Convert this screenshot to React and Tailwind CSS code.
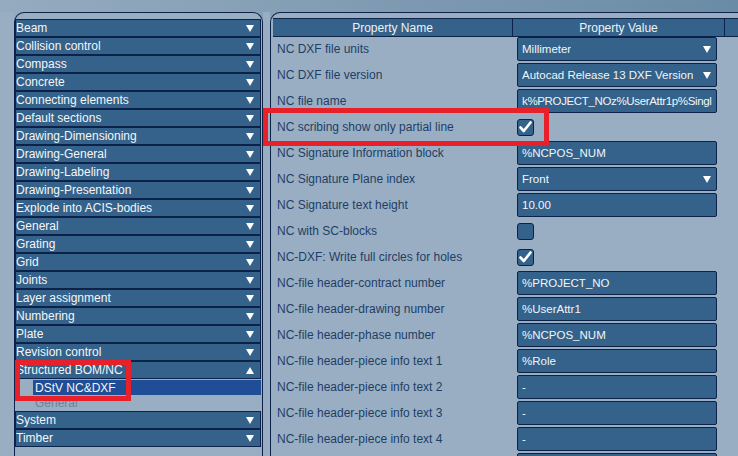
import React from "react";

const leftItems = [
  "Beam",
  "Collision control",
  "Compass",
  "Concrete",
  "Connecting elements",
  "Default sections",
  "Drawing-Dimensioning",
  "Drawing-General",
  "Drawing-Labeling",
  "Drawing-Presentation",
  "Explode into ACIS-bodies",
  "General",
  "Grating",
  "Grid",
  "Joints",
  "Layer assignment",
  "Numbering",
  "Plate",
  "Revision control",
];

const rows = [
  { name: "NC DXF file units", type: "select", value: "Millimeter" },
  { name: "NC DXF file version", type: "select", value: "Autocad Release 13 DXF Version" },
  { name: "NC file name", type: "text", value: "k%PROJECT_NOz%UserAttr1p%Singl", tight: true },
  { name: "NC scribing show only partial line", type: "check", value: true },
  { name: "NC Signature Information block", type: "text", value: "%NCPOS_NUM" },
  { name: "NC Signature Plane index", type: "select", value: "Front" },
  { name: "NC Signature text height", type: "text", value: "10.00" },
  { name: "NC with SC-blocks", type: "check", value: false },
  { name: "NC-DXF: Write full circles for holes", type: "check", value: true },
  { name: "NC-file header-contract number", type: "text", value: "%PROJECT_NO" },
  { name: "NC-file header-drawing number", type: "text", value: "%UserAttr1" },
  { name: "NC-file header-phase number", type: "text", value: "%NCPOS_NUM" },
  { name: "NC-file header-piece info text 1", type: "text", value: "%Role" },
  { name: "NC-file header-piece info text 2", type: "text", value: "-" },
  { name: "NC-file header-piece info text 3", type: "text", value: "-" },
  { name: "NC-file header-piece info text 4", type: "text", value: "-" },
];

function Down() {
  return (
    <svg width="8" height="7" viewBox="0 0 8 7" className="shrink-0">
      <polygon points="0,0 8,0 4,7" fill="#ffffff" />
    </svg>
  );
}

function Up() {
  return (
    <svg width="8" height="7" viewBox="0 0 8 7" className="shrink-0">
      <polygon points="0,7 8,7 4,0" fill="#ffffff" />
    </svg>
  );
}

function ListItem({ label, up }) {
  return (
    <div className="flex h-[18px] items-center justify-between border border-[#0d2248] bg-[#34628a] pr-[6px] text-[#f3f6f9]">
      <span className="leading-[14px]">{label}</span>
      {up ? <Up /> : <Down />}
    </div>
  );
}

function Check({ checked }) {
  return (
    <div className="flex h-[17px] w-[17px] items-center justify-center rounded-[3px] border border-[#0d2248] bg-[#34628a]">
      {checked && (
        <svg width="13" height="12" viewBox="0 0 13 12">
          <path d="M1.5 6.5 L4.8 10 L11.5 1.5" fill="none" stroke="#ffffff" strokeWidth="2.6" strokeLinecap="round" strokeLinejoin="round" />
        </svg>
      )}
    </div>
  );
}

function ValueCell({ row }) {
  if (row.type === "check") {
    return (
      <div className="flex h-[24px] items-center">
        <Check checked={row.value} />
      </div>
    );
  }
  return (
    <div className="flex h-[24px] w-[200px] items-center justify-between gap-[4px] overflow-hidden rounded-[2px] border border-[#0d2248] bg-[#34628a] pl-[4px] pr-[3px] text-[11.5px] text-[#f1f5f8]">
      <span className={row.tight ? "whitespace-nowrap leading-[15px] tracking-[-0.35px]" : "overflow-hidden whitespace-nowrap leading-[15px]"}>{row.value}</span>
      {row.type === "select" && <span className="pr-[2px]"><Down /></span>}
    </div>
  );
}

export default function App() {
  return (
    <div className="relative flex h-[456px] w-[738px] flex-col overflow-hidden bg-[linear-gradient(to_right,#95abbf,#6a8ba6)] font-['Liberation_Sans',Arial,sans-serif] text-[12px]">
      <div className="h-[12px] shrink-0" />
      <div className="flex flex-1">
        <div className="w-[14px] shrink-0 bg-[#9aaec3]" />
        <div className="w-[249px] shrink-0 rounded-t-[10px] border border-b-0 border-[#0d2248] bg-[#9aaec3] pr-[1px] pt-[6px]">
          {leftItems.map((l) => (
            <ListItem key={l} label={l} />
          ))}
          <ListItem label="Structured BOM/NC" up />
          <div className="ml-[18px] mt-px flex h-[15px] items-center bg-[#1f4e97] pl-[2px] text-[#f3f6f9]">
            <span className="leading-[14px]">DStV NC&amp;DXF</span>
          </div>
          <div className="ml-[18px] flex h-[16px] items-center pl-[2px] text-[#6f8297]">
            <span className="leading-[14px]">General</span>
          </div>
          <ListItem label="System" />
          <ListItem label="Timber" />
        </div>
        <div className="w-[7px] shrink-0 bg-[#9aaec3]" />
        <div className="flex-1 overflow-hidden rounded-tl-[10px] border-l border-t border-[#0d2248] bg-[#9aaec3] pl-[2px] pt-[5px]">
          <div className="flex h-[19px] border-y border-[#0d2248] bg-[#34628a] text-[#eef2f6]">
            <div className="flex w-[240px] shrink-0 items-center justify-center border-r border-[#0d2248]">Property Name</div>
            <div className="flex w-[212px] shrink-0 items-center justify-center border-r border-[#0d2248]">Property Value</div>
            <div className="flex-1" />
          </div>
          {rows.map((r) => (
            <div key={r.name} className="flex h-[26px]">
              <div className="flex h-[24px] w-[240px] shrink-0 items-center pl-[4px] text-[#1d3e66]">
                <span className="whitespace-nowrap leading-[15px]">{r.name}</span>
              </div>
              <div className="pl-[4px]">
                <ValueCell row={r} />
              </div>
            </div>
          ))}
          <div className="ml-[244px] h-[24px] w-[200px] rounded-[2px] border border-[#0d2248] bg-[#34628a]" />
        </div>
      </div>
      <div className="pointer-events-none absolute left-[263px] top-[108px] h-[38px] w-[286px] border-[5px] border-[#e8202a]" />
      <div className="pointer-events-none absolute left-[15px] top-[360px] h-[41px] w-[116px] border-[5px] border-[#e8202a]" />
    </div>
  );
}
